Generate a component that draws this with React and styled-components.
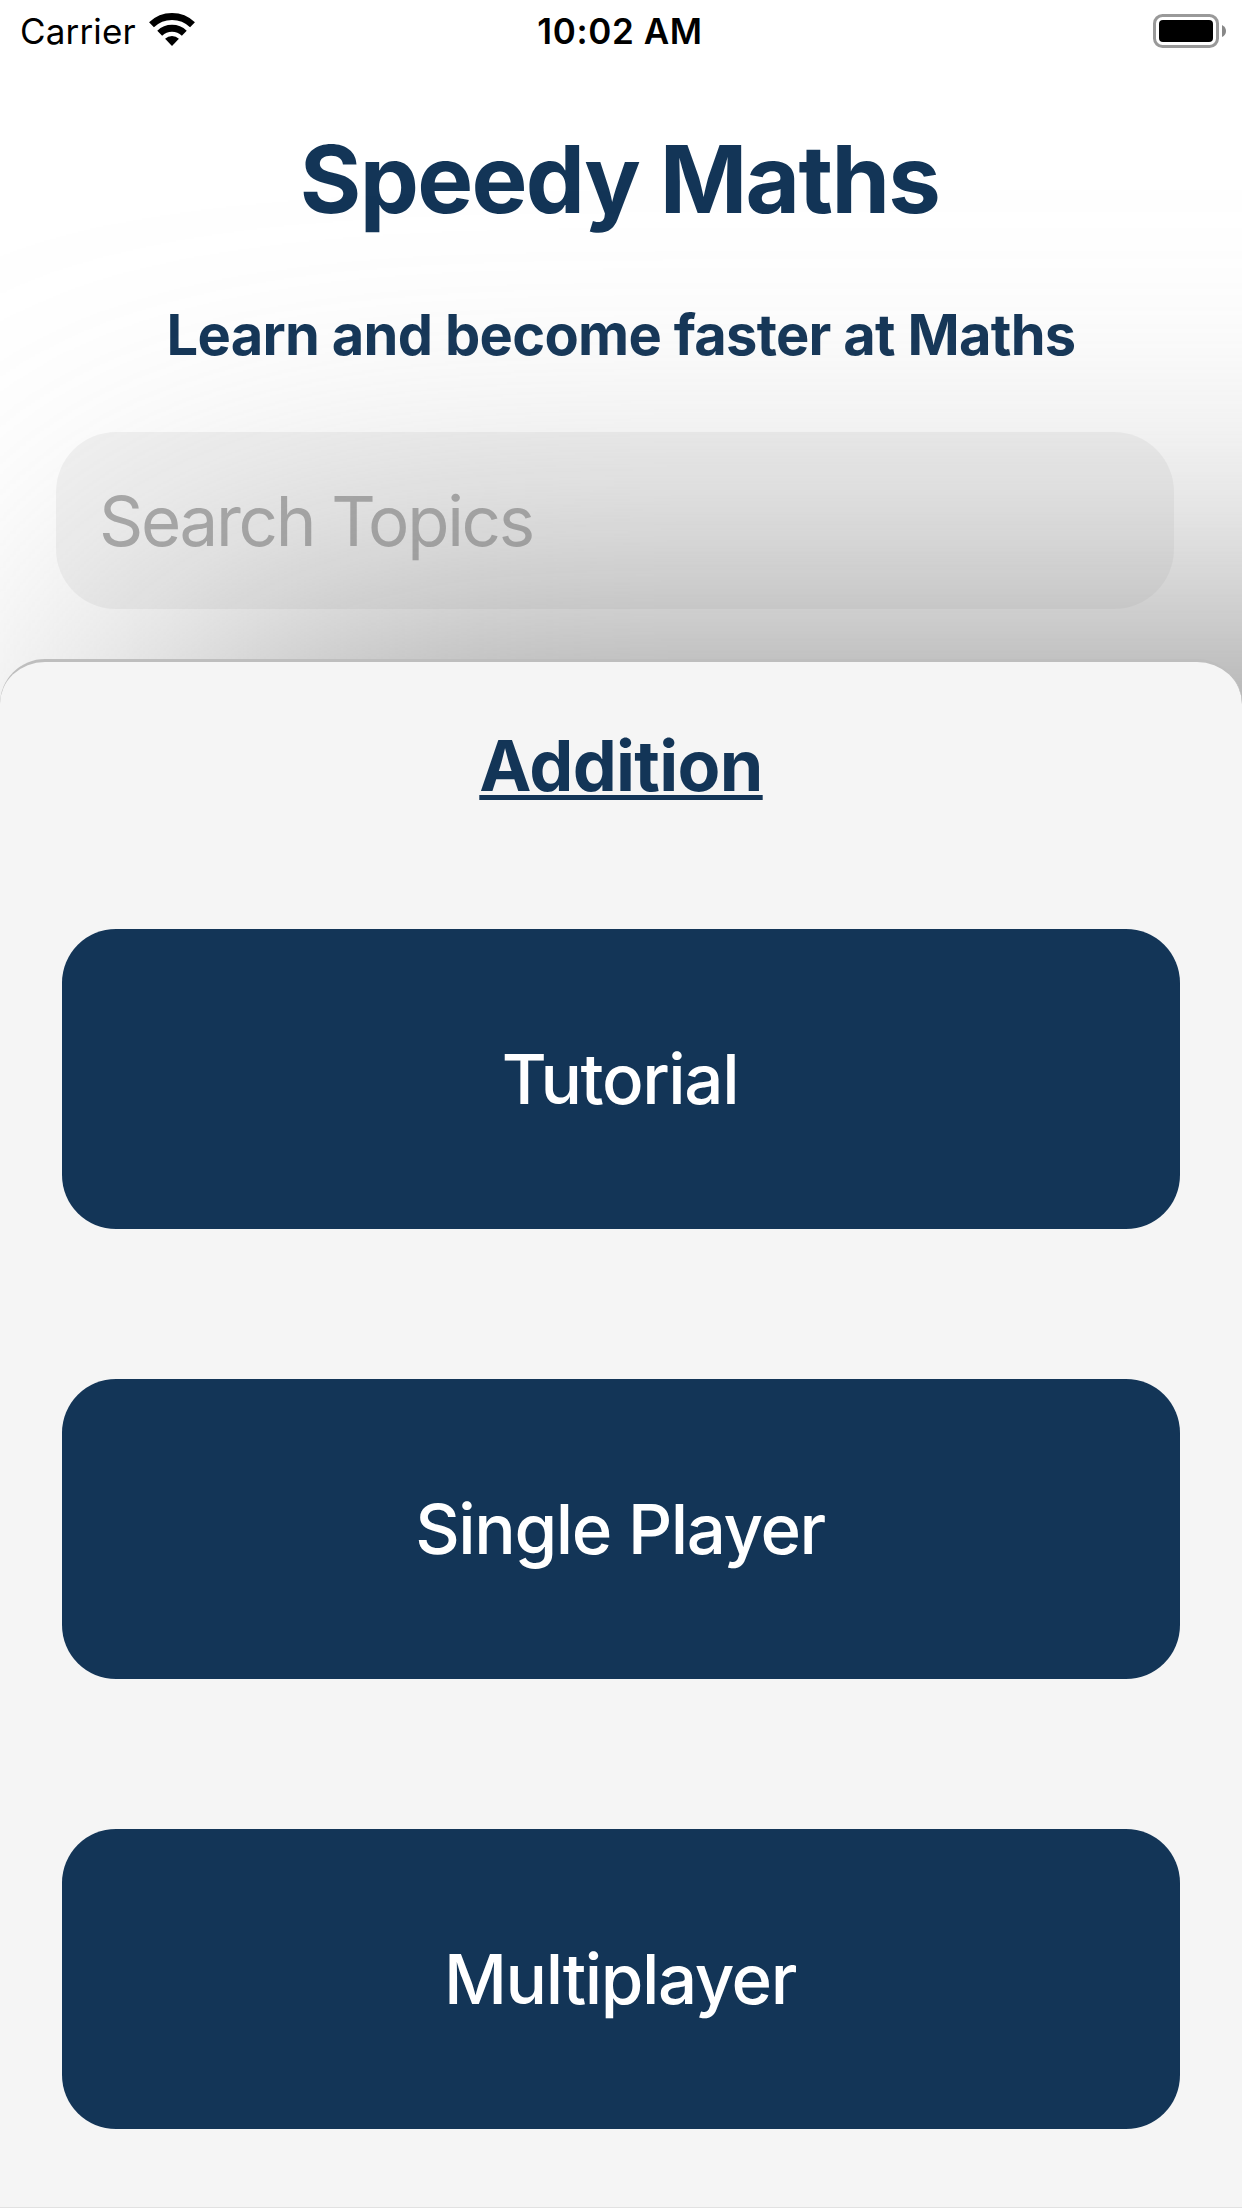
import React from "react";
import styled, { createGlobalStyle } from "styled-components";

const Global = createGlobalStyle`
  * { box-sizing: border-box; }
  body { margin: 0; background: #fff; font-family: Inter, "Liberation Sans", sans-serif; }
`;
const Screen = styled.main`
  width: 1242px; height: 2208px; overflow: hidden; background: #fff;
  display: flex; flex-direction: column; color: #133557;
`;
const StatusBar = styled.header`
  height: 60px; flex: none; padding: 0 16px 0 20px; color: #000;
  display: grid; grid-template-columns: 1fr auto 1fr; align-items: center;
  font-size: 35px; line-height: 60px;
`;
const Carrier = styled.div`
  display: flex; align-items: center; gap: 13px; letter-spacing: 0.15px; padding-top: 1px;
  svg { margin-top: -3px; }
`;
const Clock = styled.div`
  font-weight: 600; letter-spacing: 0.6px; margin-right: 6px; padding-top: 1px;
`;
const Battery = styled.svg`justify-self: end;`;
const Hero = styled.section`
  height: 599px; flex: none; display: flex; flex-direction: column; align-items: center;
`;
const Title = styled.h1`
  margin: 62px 3px 0 0; font-size: 94px; line-height: 114px; font-weight: 700; letter-spacing: -1.7px;
`;
const Subtitle = styled.h2`
  margin: 65px 0 0; font-size: 56px; line-height: 68px; font-weight: 700; letter-spacing: -0.7px;
`;
const Search = styled.input`
  margin: 63px 12px 0 0; width: 1118px; height: 177px; border: 0; border-radius: 60px;
  padding: 0 43px; background: rgba(0, 0, 0, 0.047); font: 400 69px Inter, sans-serif;
  letter-spacing: -2.3px; outline: none;
  &::placeholder { color: #aaa; opacity: 1; }
`;
const SheetArea = styled.div`
  position: relative; flex: none; height: 1549px;
  &::before {
    content: ""; position: absolute; inset: 10px -900px -700px 170px; pointer-events: none;
    border-radius: 45px; background: #808080; filter: blur(200px);
  }
`;
const Sheet = styled.section`
  position: relative; height: 100%; background: #f5f5f5;
  border-top: 3px solid #bebebe; border-bottom: 1px solid #e2e2e2;
  border-radius: 45px 45px 0 0; display: flex; flex-direction: column; align-items: center;
`;
const Heading = styled.h3`
  margin: 62px 0 121px; font-size: 70px; line-height: 84px; font-weight: 700; letter-spacing: -0.7px;
  text-decoration: underline; text-decoration-thickness: 5px; text-underline-offset: 4px;
  text-decoration-skip-ink: none;
`;
const Options = styled.div`display: flex; flex-direction: column; gap: 150px;`;
const Option = styled.button`
  width: 1118px; height: 300px; border: 0; border-radius: 54px; background: #133557; color: #fff;
  font: 500 69px Inter, sans-serif; letter-spacing: -1.4px; padding: 0 2px 0 0;
`;

export default function App() {
  return (
    <Screen>
      <Global />
      <StatusBar>
        <Carrier>
          Carrier
          <svg width="46" height="33" viewBox="0 0 46 33">
            <path d="M2.5 11.8A29.5 29.5 0 0 1 43.5 11.8" fill="none" stroke="#000" strokeWidth="7" />
            <path d="M10.7 20.3A17.7 17.7 0 0 1 35.3 20.3" fill="none" stroke="#000" strokeWidth="7" />
            <path d="M23 33L16.1 25.8A10 10 0 0 1 29.9 25.8Z" />
          </svg>
        </Carrier>
        <Clock>10:02 AM</Clock>
        <Battery width="73" height="34" viewBox="0 0 73 34">
          <rect x="1.5" y="1.5" width="63" height="31" rx="8" fill="none" stroke="#999" strokeWidth="3" />
          <rect x="6" y="6" width="54" height="22" rx="4" />
          <path d="M69 11Q73 13 73 17Q73 21 69 23Z" fill="#888" />
        </Battery>
      </StatusBar>
      <Hero>
        <Title>Speedy Maths</Title>
        <Subtitle>Learn and become faster at Maths</Subtitle>
        <Search placeholder="Search Topics" />
      </Hero>
      <SheetArea>
        <Sheet>
          <Heading>Addition</Heading>
          <Options>
            <Option>Tutorial</Option>
            <Option>Single Player</Option>
            <Option>Multiplayer</Option>
          </Options>
        </Sheet>
      </SheetArea>
    </Screen>
  );
}
